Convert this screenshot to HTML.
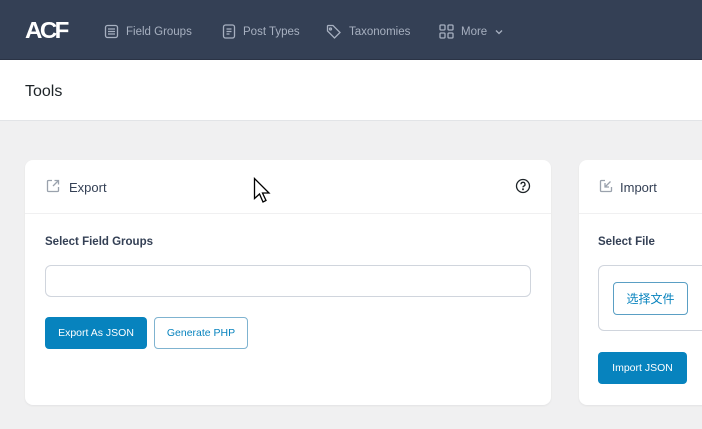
<!DOCTYPE html><html><head><style>
body{margin:0;width:702px;height:429px;overflow:hidden;background:#f0f0f1;font-family:"Liberation Sans","Noto Sans CJK SC",sans-serif;position:relative}
.top{position:absolute;left:0;top:0;width:702px;height:59px;background:#344055;border-bottom:1px solid #2a3345}
.logo{position:absolute;left:25px;top:17px;color:#fff;font-weight:900;font-size:23px;letter-spacing:-2.5px;transform:scaleX(1.05);transform-origin:left}
.nav{position:absolute;top:24px;color:#a7b0c0;font-size:11.5px;display:flex;align-items:center;gap:7px}
.nav svg{stroke:#a7b0c0;fill:none;stroke-width:1.3}
.tbar{position:absolute;left:0;top:60px;width:702px;height:60px;background:#fff;border-bottom:1px solid #e2e4e7}
.tbar span{position:absolute;left:25px;top:23px;font-size:16px;color:#1d2327}
.card{position:absolute;top:160px;height:245px;background:#fff;border-radius:8px;box-shadow:0 1px 2px rgba(0,0,0,.06)}
.ch{height:53px;border-bottom:1px solid #f0f0f1;position:relative}
.ch span{position:absolute;left:44px;top:20px;font-size:13px;color:#344055}
.lab{position:absolute;font-size:11.5px;font-weight:bold;color:#344055}
.btn{position:absolute;border-radius:4px;font-size:10.5px;display:flex;align-items:center;justify-content:center;box-sizing:border-box}
.pri{background:#0783be;color:#fff}
.sec{border:1px solid #0783be;color:#0783be;background:#fff}
</style></head><body>
<div class="top">
<div class="logo">ACF</div>
<div class="nav" style="left:104px"><svg width="15" height="15"><rect x="1.5" y="1.5" width="12" height="12" rx="2"/><path d="M4 5h7M4 7.5h7M4 10h7"/></svg>Field Groups</div>
<div class="nav" style="left:222px"><svg width="14" height="15"><rect x="1.5" y="1" width="11" height="13" rx="2"/><path d="M4.5 5h5M4.5 7.5h5M4.5 10h3"/></svg>Post Types</div>
<div class="nav" style="left:326px"><svg width="16" height="16"><path d="M1.5 2v5l7 7 5.5-5.5-7-7h-5z"/><circle cx="4.5" cy="5" r="1"/></svg>Taxonomies</div>
<div class="nav" style="left:439px"><svg width="15" height="15"><rect x="1" y="1" width="5" height="5" rx="1"/><rect x="9" y="1" width="5" height="5" rx="1"/><rect x="1" y="9" width="5" height="5" rx="1"/><rect x="9" y="9" width="5" height="5" rx="1"/></svg>More <svg width="10" height="10"><path d="M2 3.5l3 3 3-3"/></svg></div>
</div>
<div class="tbar"><span>Tools</span></div>
<div class="card" style="left:25px;width:526px">
<div class="ch"><svg style="position:absolute;left:20px;top:18px" width="16" height="16" fill="none" stroke="#9aa2ad" stroke-width="1.3"><path d="M7 2.5H3.5a1 1 0 0 0-1 1v9a1 1 0 0 0 1 1h9a1 1 0 0 0 1-1V9M9.5 2.5h4v4M13.5 2.5L8 8"/></svg><span>Export</span>
<svg style="position:absolute;left:490px;top:18px" width="16" height="16" fill="none" stroke="#1d2327" stroke-width="1.3"><circle cx="8" cy="8" r="6.5"/><path d="M6 6.3a2 2 0 1 1 2.6 1.9c-.5.2-.6.5-.6 1.2"/><circle cx="8" cy="11.3" r=".4"/></svg></div>
<div class="lab" style="left:20px;top:76px">Select Field Groups</div>
<div style="position:absolute;left:20px;top:105px;width:486px;height:32px;border:1px solid #d0d5dd;border-radius:6px;box-sizing:border-box"></div>
<div class="btn pri" style="left:20px;top:157px;width:102px;height:32px">Export As JSON</div>
<div class="btn sec" style="left:129px;top:157px;width:94px;height:32px;border-color:#7fb3d0">Generate PHP</div>
</div>
<div class="card" style="left:579px;width:140px">
<div class="ch"><svg style="position:absolute;left:19px;top:18px" width="16" height="16" fill="none" stroke="#9aa2ad" stroke-width="1.3"><path d="M7 2.5H3.5a1 1 0 0 0-1 1v9a1 1 0 0 0 1 1h9a1 1 0 0 0 1-1V9M12.5 3.5L7 9M7 5v4h4"/></svg><span style="left:41px">Import</span></div>
<div class="lab" style="left:19px;top:76px">Select File</div>
<div style="position:absolute;left:19px;top:105px;width:140px;height:66px;border:1px solid #d0d5dd;border-radius:6px;box-sizing:border-box"></div>
<div class="btn sec" style="left:34px;top:122px;width:75px;height:33px;font-size:12px;border-color:#5a9fc4">选择文件</div>
<div class="btn pri" style="left:19px;top:192px;width:89px;height:32px">Import JSON</div>
</div>
<svg style="position:absolute;left:253px;top:177px" width="20" height="28"><path d="M1.5 1.5v20l5-4.5 3.5 8 3-1.5-3.5-7.5h6.5z" fill="#fff" stroke="#000" stroke-width="1.3"/></svg>
</body></html>
